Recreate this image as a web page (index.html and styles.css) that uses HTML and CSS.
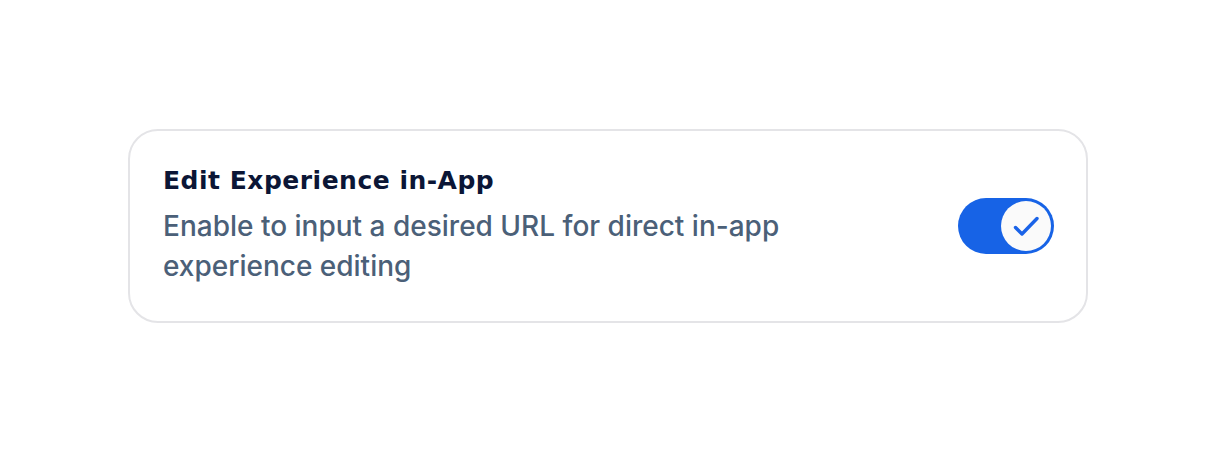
FILE: index.html
```html
<!DOCTYPE html>
<html lang="en">
  <head>
    <meta name="viewport" content="width=device-width, initial-scale=1.0" />
    <title>Settings</title>
    <link rel="stylesheet" href="styles.css">
  </head>
  <body>
    <div class="page">
      <div class="setting-card">
        <div class="setting-text">
          <h2 class="setting-title">Edit Experience in-App</h2>
          <p class="setting-desc">Enable to input a desired URL for direct in-app experience editing</p>
        </div>
        <button class="toggle on" aria-pressed="true">
          <span class="knob">
            <svg width="26" height="22" viewBox="0 0 26 22" fill="none">
              <path d="M2.5 12.5l6.5 6.5L24 3.5" stroke="#1a63e8" stroke-width="3.4" stroke-linecap="round" stroke-linejoin="round"/>
            </svg>
          </span>
        </button>
      </div>
    </div>
  </body>
</html>
```

FILE: styles.css
```css
* {
  padding: 0;
  margin: 0;
  box-sizing: border-box;
}
body {
  background-color: #ffffff;
  font-family: "Inter", sans-serif;
}
.page {
  height: 451px;
  display: flex;
  align-items: center;
  justify-content: center;
}
.setting-card {
  width: 960px;
  height: 194px;
  border: 2px solid #e4e4e7;
  border-radius: 30px;
  padding: 0 32px 0 33px;
  display: flex;
  align-items: center;
  justify-content: space-between;
}
.setting-text {
  max-width: 660px;
}
.setting-title {
  font-family: "DejaVu Sans", sans-serif;
  font-size: 25px;
  font-weight: 700;
  color: #0b1636;
  letter-spacing: 0.5px;
  line-height: 32px;
  margin-bottom: 9px;
}
.setting-desc {
  font-size: 28px;
  font-weight: 500;
  color: #4b6078;
  line-height: 40px;
}
.toggle {
  width: 96px;
  height: 56px;
  border: none;
  border-radius: 28px;
  background-color: #1763e6;
  padding: 3px;
  display: flex;
  justify-content: flex-end;
  cursor: pointer;
}
.knob {
  width: 50px;
  height: 50px;
  border-radius: 50%;
  background-color: #fafafa;
  display: grid;
  place-items: center;
}
```
